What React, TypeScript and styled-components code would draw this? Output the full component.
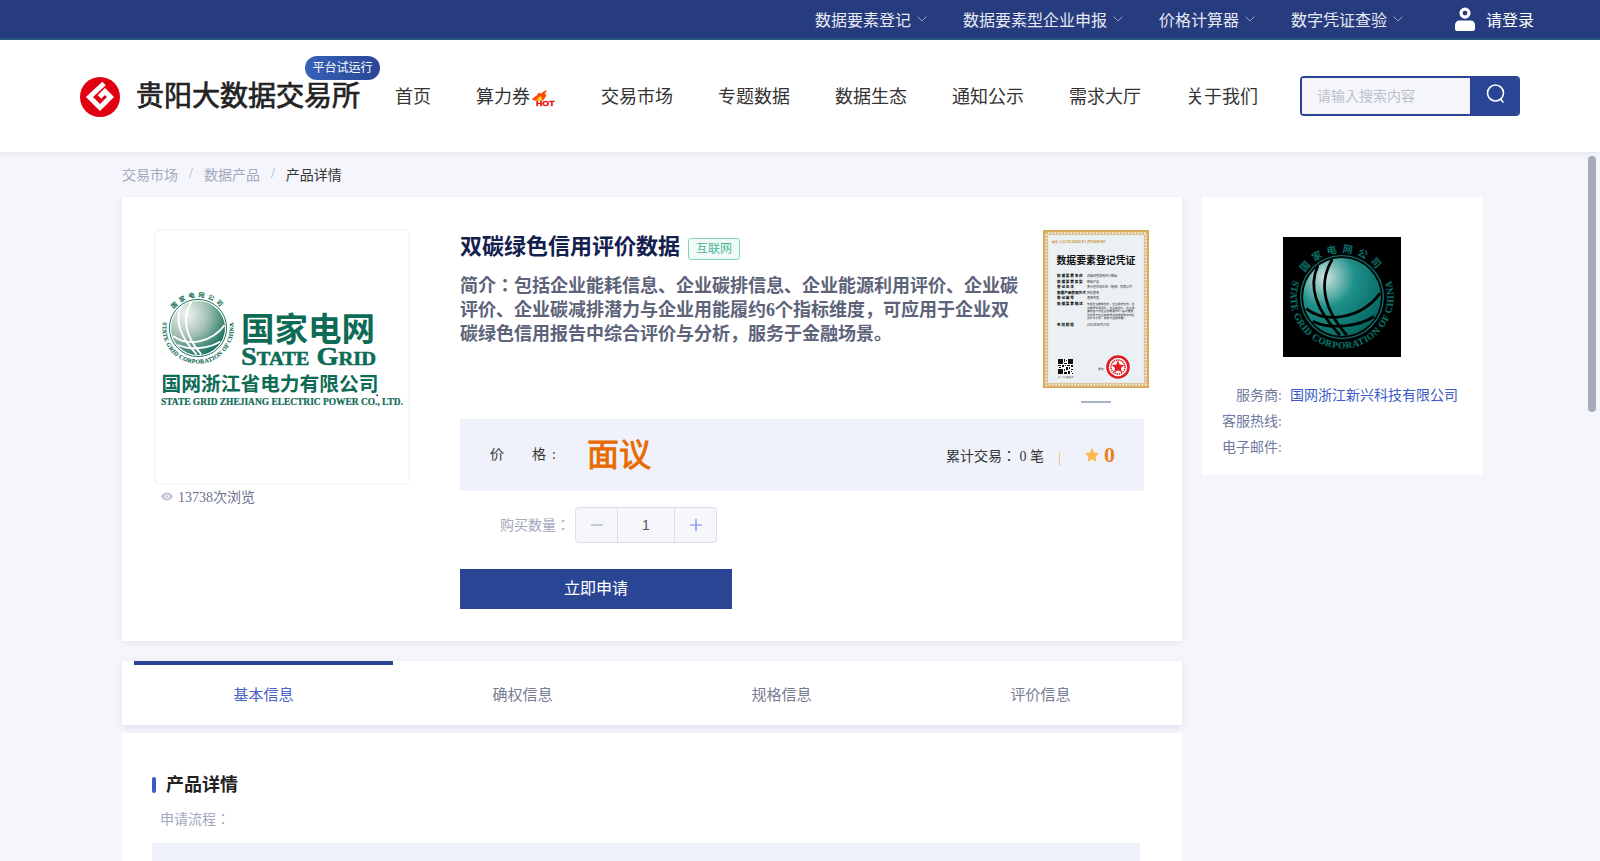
import styled, { createGlobalStyle } from "styled-components";

const GlobalStyle = createGlobalStyle`
  html, body, #root {
    height: 100%;
    margin: 0;
  }
  body {
    background: #f5f6fb;
    color: #333;
    font-family: "Liberation Serif", "Noto Sans CJK JP", serif;
    font-size: 14px;
    overflow: hidden;
  }
  * {
    box-sizing: border-box;
  }
`;

const topLinks = ["数据要素登记", "数据要素型企业申报", "价格计算器", "数字凭证查验"];
const navLinks = ["首页", "算力券", "交易市场", "专题数据", "数据生态", "通知公示", "需求大厅", "关于我们"];
const tabs = ["基本信息", "确权信息", "规格信息", "评价信息"];
const certRows = [
  { label: "数 据 要 素 名 称", value: "双碳绿色信用评价数据", y: 47 },
  { label: "数 据 要 素 类 型", value: "数据产品", y: 52.5 },
  { label: "登 记 主 体", value: "贵州省市场主体（集团）有限公司", y: 58 },
  { label: "数据产品使用方式", value: "授权使用", y: 63.5 },
  { label: "登 记 编 号", value: "通用性质", y: 69 },
  { label: "数 据 要 素 描 述", value: "", y: 75 },
  { label: "有 效 期 限", value: "2025年06月27日", y: 95.5 },
];
const certLines = [
  "包括企业能耗信息、企业碳排信息、企",
  "业能源利用评价、企业碳评价、企业碳",
  "减排潜力与企业用能履约6个指标维度",
  "可应用于企业双碳绿色信用报告中综合",
  "评价与分析，服务于金融场景。",
];

const UserIcon = () => (
  <svg width="22" height="24" viewBox="0 0 22 24" fill="#fff">
    <path d="M11 0.5a5.6 5.6 0 1 0 0 11.2a5.6 5.6 0 0 0 0-11.2zm0 3.2a2.4 2.4 0 1 1 0 4.8a2.4 2.4 0 0 1 0-4.8z" fillRule="evenodd" />
    <path d="M5.5 13.5h11c2.6 0 4.5 2 4.5 4.6V22c0 1.1-.9 2-2 2H3c-1.1 0-2-.9-2-2v-3.9c0-2.6 1.900-4.600 4.500-4.600z" />
  </svg>
);

const Chevron = () => (
  <svg width="10" height="6" viewBox="0 0 10 6" fill="none" stroke="#8f9cc0" strokeWidth="1">
    <path d="M0.500 0.500L5 5L9.500 0.500" />
  </svg>
);

const LogoMark = () => (
  <svg width="40" height="40" viewBox="0 0 40 40">
    <circle cx="20" cy="20" r="20" fill="#e00012" />
    <path d="M24 6.500L9.500 20L20 30.500L30.500 20L25 14.500L19.500 20" fill="none" stroke="#fff" strokeWidth="5" strokeLinejoin="miter" />
  </svg>
);

const HotMark = () => (
  <svg width="25" height="17" viewBox="0 0 25 17">
    <path d="M0.500 9.500C2.500 8.500 3.500 6.500 5.500 6C5.500 4.500 7.500 3 9 2.500C8.500 3.500 9.500 4 10.500 3C11.500 2 13.500 1 16 0C14.500 2 15 3 13.500 4C15 3.800 15.500 4.500 15 6C14.500 7.500 13.500 8.500 12 10.500L4 10.500C3 10.200 1.500 10 0.500 9.500Z" fill="#ff4a00" />
    <path d="M6 9.500C7 7.500 8.500 6.500 10 6C9.800 7 10.500 7.500 11 8.500L11 10.500L6.500 10.500Z" fill="#ffd21a" />
    <text x="5" y="15.800" fontFamily="Liberation Sans, sans-serif" fontWeight="700" fontSize="7.500" fill="#f00000" stroke="#f00000" strokeWidth="0.300" textLength="18.500" lengthAdjust="spacingAndGlyphs">HOT</text>
  </svg>
);

const SearchMark = () => (
  <svg width="22" height="20" viewBox="0 0 22 20" fill="none" stroke="#fff" strokeWidth="1.600">
    <circle cx="10.500" cy="9" r="8" />
    <path d="M15.500 15L18 18" strokeLinecap="round" />
  </svg>
);

const EyeMark = () => (
  <svg width="12" height="9" viewBox="0 0 12 9">
    <path d="M0 4.500C1.500 1.700 3.600 0.500 6 0.500S10.500 1.700 12 4.500C10.500 7.300 8.400 8.500 6 8.500S1.500 7.300 0 4.500Z" fill="#c1c5d6" />
    <circle cx="6" cy="4.500" r="2.300" fill="#fff" />
    <circle cx="6" cy="4.500" r="1.300" fill="#c1c5d6" />
  </svg>
);

const StarMark = () => (
  <svg width="16" height="16" viewBox="0 0 24 24" fill="#ffb84d">
    <path d="M12 1.500l3.300 6.900 7.500 1-5.500 5.200 1.400 7.500L12 18.500l-6.700 3.600 1.400-7.500L1.200 9.400l7.500-1z" />
  </svg>
);

const MinusMark = () => (
  <svg width="12" height="12" viewBox="0 0 12 12" stroke="#a3aabf" strokeWidth="1.200">
    <path d="M0 6h12" />
  </svg>
);

const PlusMark = () => (
  <svg width="12" height="12" viewBox="0 0 12 12" stroke="#6f80ea" strokeWidth="1.200">
    <path d="M0 6h12M6 0v12" />
  </svg>
);

type GlobeProps = {
  cx: number;
  cy: number;
  r: number;
  id: string;
  ring: string;
  line: string;
  light: string;
  mid: string;
  dark: string;
  textSize: number;
};

// the round State Grid emblem, shared by the big logo and the black square
const GlobeEmblem = ({ cx, cy, r, id, ring, line, light, mid, dark, textSize }: GlobeProps) => {
  const topR = r * 1.14;
  const bottomR = r * 1.32;
  const x = (v: number) => cx + v * r;
  const y = (v: number) => cy + v * r;
  return (
    <g>
      <defs>
        <radialGradient id={`${id}-g`} cx="28%" cy="25%" r="85%">
          <stop offset="0%" stopColor={light} />
          <stop offset="45%" stopColor={mid} />
          <stop offset="100%" stopColor={dark} />
        </radialGradient>
        <path id={`${id}-top`} d={`M${cx - topR * 0.866} ${cy - topR * 0.5}A${topR} ${topR} 0 0 1 ${cx + topR * 0.866} ${cy - topR * 0.5}`} />
        <path id={`${id}-bottom`} d={`M${cx - bottomR * 0.9} ${cy - bottomR * 0.436}A${bottomR} ${bottomR} 0 1 0 ${cx + bottomR * 0.9} ${cy - bottomR * 0.436}`} />
      </defs>
      <circle cx={cx} cy={cy} r={r * 1.06} fill="none" stroke={ring} strokeWidth={r * 0.035} />
      <circle cx={cx} cy={cy} r={r} fill={`url(#${id}-g)`} />
      <g fill="none" stroke={line} strokeWidth={r * 0.07}>
        <path d={`M${x(-0.62)} ${y(-0.8)}C${x(-0.9)} ${y(-0.2)} ${x(-0.6)} ${y(0.4)} ${x(-0.05)} ${y(0.98)}`} />
        <path d={`M${x(-0.25)} ${y(-0.96)}C${x(-0.65)} ${y(-0.3)} ${x(-0.4)} ${y(0.4)} ${x(0.12)} ${y(0.98)}`} />
        <path d={`M${x(-0.92)} ${y(0.3)}C${x(-0.4)} ${y(0.7)} ${x(0.5)} ${y(0.55)} ${x(0.98)} ${y(-0.1)}`} />
        <path d={`M${x(-0.75)} ${y(0.62)}C${x(-0.3)} ${y(0.85)} ${x(0.45)} ${y(0.75)} ${x(0.82)} ${y(0.5)}`} />
      </g>
      <text fontFamily="Noto Sans CJK SC, sans-serif" fontWeight="700" fontSize={textSize * 1.05} fill={ring}>
        <textPath href={`#${id}-top`} startOffset="50%" textAnchor="middle" letterSpacing={textSize * 0.5}>国家电网公司</textPath>
      </text>
      <text fontFamily="Liberation Serif, serif" fontWeight="700" fontSize={textSize} fill={ring} stroke={ring} strokeWidth={textSize * 0.02}>
        <textPath href={`#${id}-bottom`} startOffset="50%" textAnchor="middle" letterSpacing={textSize * 0.05}>STATE GRID CORPORATION OF CHINA</textPath>
      </text>
    </g>
  );
};

const StateGridLogo = () => (
  <svg width="252" height="252" viewBox="0 0 252 252">
    <GlobeEmblem cx={42} cy={97} r={27} id="big" ring="#0e6b56" line="#fff" light="#f1f4f1" mid="#a9c4b8" dark="#0e6b56" textSize={6} />
    <g fill="#0e6b56" stroke="#0e6b56" fontWeight="700">
      <text x="85" y="110" strokeWidth="0" fontFamily="Noto Sans CJK SC, sans-serif" fontSize="33" textLength="134" lengthAdjust="spacingAndGlyphs">国家电网</text>
      <text x="85" y="134" strokeWidth="0.500" fontFamily="Liberation Serif, serif" fontSize="25" textLength="135" lengthAdjust="spacingAndGlyphs" style={{ fontVariant: "small-caps" }}>State Grid</text>
      <text x="5.500" y="160" strokeWidth="0" fontFamily="Noto Sans CJK SC, sans-serif" fontSize="19.600" textLength="217" lengthAdjust="spacingAndGlyphs">国网浙江省电力有限公司</text>
      <text x="5" y="173.500" strokeWidth="0.200" fontFamily="Liberation Serif, serif" fontSize="9.500" textLength="242" lengthAdjust="spacingAndGlyphs">STATE GRID ZHEJIANG ELECTRIC POWER CO., LTD.</text>
    </g>
    <rect x="220.500" y="163.500" width="1.500" height="1.500" fill="#222" />
  </svg>
);

const VendorLogo = () => (
  <svg width="118" height="120" viewBox="0 0 118 120">
    <rect width="118" height="120" fill="#000" />
    <GlobeEmblem cx={59} cy={60} r={39} id="small" ring="#0b6f68" line="#000" light="#d4e4e2" mid="#1d9089" dark="#05645f" textSize={9.500} />
  </svg>
);

const Certificate = () => (
  <svg width="106" height="158" viewBox="0 0 106 158">
    <rect width="106" height="158" fill="#eaf0f3" />
    <rect x="1" y="1" width="104" height="156" fill="none" stroke="#d9a95b" strokeWidth="2" />
    <rect x="3" y="3" width="100" height="152" fill="none" stroke="#e4bd7b" strokeWidth="2.400" strokeDasharray="2 1.200" />
    <rect x="4.800" y="4.800" width="96.400" height="148.400" fill="none" stroke="#c99a4f" strokeWidth="0.500" />
    <text x="9" y="13" fontFamily="Liberation Sans, sans-serif" fontWeight="700" fontSize="2.800" fill="#c99032">编号: 1-22 736 202506 R 1-JP762698 R01</text>
    <text x="53" y="34" textAnchor="middle" fontFamily="Noto Sans CJK SC, sans-serif" fontWeight="700" fontSize="10" fill="#111" textLength="79" lengthAdjust="spacingAndGlyphs">数据要素登记凭证</text>
    {certRows.map((row) => (
      <g key={row.label}>
        <text x="14" y={row.y} fontFamily="Noto Sans CJK SC, sans-serif" fontWeight="700" fontSize="3.600" fill="#000">{row.label}</text>
        <text x="44" y={row.y} fontFamily="Noto Sans CJK SC, sans-serif" fontSize="3" fill="#333">{row.value}</text>
      </g>
    ))}
    {certLines.map((line, i) => (
      <text key={line} x="44" y={75 + i * 3.600} fontFamily="Noto Sans CJK SC, sans-serif" fontSize="2.800" fill="#222">{line}</text>
    ))}
    <rect x="15" y="129" width="15" height="15" fill="#fff" />
    <path d="M15 129h5v5h-5zM25 129h5v5h-5zM15 139h5v5h-5zM21 129h1v3h-1zM23 130h1v1h-1zM21 133h3v1h-3zM15 135h3v1h-3zM19 135h2v2h-2zM22 135h1v1h-1zM24 135h3v1h-3zM28 135h2v2h-2zM16 137h2v1h-2zM23 137h2v3h-2zM26 137h1v2h-1zM21 139h1v2h-1zM28 139h2v1h-2zM21 142h3v2h-3zM25 141h2v3h-2zM28 141h1v1h-1zM29 143h1v1h-1z" fill="#111" />
    <text x="15" y="148" fontFamily="Noto Sans CJK SC, sans-serif" fontSize="2.500" fill="#555">扫一扫 查真伪</text>
    <text x="55" y="140" fontFamily="Noto Sans CJK SC, sans-serif" fontSize="2.800" fill="#444">贵阳</text>
    <circle cx="75" cy="137" r="10.500" fill="#fff" stroke="#e01a22" strokeWidth="2.600" />
    <circle cx="75" cy="137" r="7" fill="none" stroke="#e01a22" strokeWidth="1.600" strokeDasharray="1.400 0.800" />
    <path d="M75 130.500l1.800 4.200 4.500.4-3.400 3 1 4.400-3.900-2.300-3.900 2.300 1-4.400-3.400-3 4.500-.4z" fill="#e01a22" />
  </svg>
);

const App = () => (
  <Page>
    <GlobalStyle />
    <TopBar>
      {topLinks.map((link) => (
        <TopLink key={link}>
          {link}
          <Chevron />
        </TopLink>
      ))}
      <LoginLink>
        <UserIcon />
        请登录
      </LoginLink>
    </TopBar>

    <Header>
      <Brand>
        <LogoMark />
        <BrandName>贵阳大数据交易所</BrandName>
        <BrandBadge>平台试运行</BrandBadge>
      </Brand>
      <Nav>
        {navLinks.map((link) => (
          <NavLink key={link}>
            {link}
            {link === "算力券" && <HotMark />}
          </NavLink>
        ))}
      </Nav>
      <SearchBox>
        <SearchInput placeholder="请输入搜索内容" />
        <SearchButton>
          <SearchMark />
        </SearchButton>
      </SearchBox>
    </Header>

    <Scroller>
      <Content>
        <MainColumn>
          <Breadcrumb>
            <Crumb>交易市场</Crumb>
            <CrumbSep>/</CrumbSep>
            <Crumb>数据产品</Crumb>
            <CrumbSep>/</CrumbSep>
            <Crumb $current>产品详情</Crumb>
          </Breadcrumb>

          <ProductCard>
            <Gallery>
              <LogoFrame>
                <StateGridLogo />
              </LogoFrame>
              <Views>
                <EyeMark />
                13738次浏览
              </Views>
            </Gallery>

            <Info>
              <InfoTop>
                <Summary>
                  <TitleRow>
                    <Title>双碳绿色信用评价数据</Title>
                    <Tag>互联网</Tag>
                  </TitleRow>
                  <Intro>简介：包括企业能耗信息、企业碳排信息、企业能源利用评价、企业碳评价、企业碳减排潜力与企业用能履约6个指标维度，可应用于企业双碳绿色信用报告中综合评价与分析，服务于金融场景。</Intro>
                </Summary>
                <CertColumn>
                  <Certificate />
                  <CertDot />
                </CertColumn>
              </InfoTop>

              <PriceBar>
                <PriceLabel>
                  <span>价</span>
                  <span>格</span>
                  <span>:</span>
                </PriceLabel>
                <PriceValue>面议</PriceValue>
                <TradeCount>累计交易： 0 笔</TradeCount>
                <PriceDivider />
                <StarMark />
                <Score>0</Score>
              </PriceBar>

              <QuantityRow>
                <QuantityLabel>购买数量：</QuantityLabel>
                <Stepper>
                  <StepButton>
                    <MinusMark />
                  </StepButton>
                  <StepValue>1</StepValue>
                  <StepButton>
                    <PlusMark />
                  </StepButton>
                </Stepper>
              </QuantityRow>

              <ApplyButton>立即申请</ApplyButton>
            </Info>
          </ProductCard>

          <TabCard>
            {tabs.map((tab, i) => (
              <Tab key={tab} $active={i === 0}>
                {tab}
              </Tab>
            ))}
          </TabCard>

          <DetailCard>
            <SectionTitle>产品详情</SectionTitle>
            <SectionLabel>申请流程：</SectionLabel>
            <FlowBlock />
          </DetailCard>
        </MainColumn>

        <VendorCard>
          <VendorLogoWrap>
            <VendorLogo />
          </VendorLogoWrap>
          <VendorRow>
            <VendorLabel>服务商:</VendorLabel>
            <VendorLink>国网浙江新兴科技有限公司</VendorLink>
          </VendorRow>
          <VendorRow>
            <VendorLabel>客服热线:</VendorLabel>
          </VendorRow>
          <VendorRow>
            <VendorLabel>电子邮件:</VendorLabel>
          </VendorRow>
        </VendorCard>
      </Content>
    </Scroller>
    <ScrollThumb />
  </Page>
);

export default App;

const Page = styled.div`
  position: relative;
  height: 100vh;
  display: flex;
  flex-direction: column;
  overflow: hidden;
`;

const TopBar = styled.div`
  flex: none;
  height: 40px;
  padding-right: 66px;
  display: flex;
  align-items: center;
  justify-content: flex-end;
  gap: 36px;
  background: #273c7e;
  border-bottom: 2px solid #25587c;
`;

const TopLink = styled.a`
  display: flex;
  align-items: center;
  gap: 6px;
  color: #e6e9f3;
  font-size: 16px;
`;

const LoginLink = styled(TopLink)`
  margin-left: 15px;
  gap: 10px;
  color: #fff;
`;

const Header = styled.header`
  position: relative;
  z-index: 2;
  flex: none;
  height: 112px;
  padding-left: 80px;
  display: flex;
  align-items: center;
  background: #fff;
  box-shadow: 0 1px 6px rgba(40, 50, 90, 0.1);
`;

const Brand = styled.div`
  position: relative;
  margin-top: 2px;
  display: flex;
  align-items: center;
  gap: 16px;
`;

const BrandName = styled.div`
  color: #222;
  font-size: 28px;
  font-weight: 400;
  line-height: 40px;
  white-space: nowrap;
  -webkit-text-stroke: 0.7px #222;
`;

const BrandBadge = styled.div`
  position: absolute;
  top: -21px;
  right: -20px;
  width: 75px;
  height: 24px;
  border-radius: 12px;
  background: linear-gradient(90deg, #3661b8, #2a4795);
  color: #fff;
  font-size: 12px;
  line-height: 24px;
  text-align: center;
`;

const Nav = styled.nav`
  margin-left: 35px;
  padding-bottom: 2px;
  display: flex;
  align-items: center;
  gap: 45px;
`;

const NavLink = styled.a`
  display: flex;
  align-items: center;
  color: #333;
  font-size: 18px;
  white-space: nowrap;

  svg {
    margin: 7px 0 0 1px;
  }
`;

const SearchBox = styled.div`
  width: 220px;
  height: 40px;
  margin-left: 42px;
  display: flex;
  border: 2px solid #2b4595;
  border-radius: 4px;
  overflow: hidden;
`;

const SearchInput = styled.input`
  flex: 1;
  min-width: 0;
  padding: 2px 15px 0;
  border: none;
  outline: none;
  background: #f5f6fa;
  font-family: inherit;
  font-size: 14px;

  &::placeholder {
    color: #bcbfcd;
    opacity: 1;
  }
`;

const SearchButton = styled.div`
  flex: none;
  width: 48px;
  padding: 0 0 5px 3px;
  display: flex;
  align-items: center;
  justify-content: center;
  background: #2b4595;
`;

const Scroller = styled.div`
  flex: 1;
  min-height: 0;
  overflow: hidden;
`;

const ScrollThumb = styled.div`
  position: absolute;
  top: 156px;
  right: 4px;
  width: 8px;
  height: 256px;
  border-radius: 4px;
  background: #a5acb8;
`;

const Content = styled.div`
  width: 1360px;
  margin-left: 122px;
  display: flex;
  align-items: flex-start;
  gap: 20px;
`;

const MainColumn = styled.main`
  flex: none;
  width: 1060px;
`;

const Breadcrumb = styled.div`
  height: 45px;
  padding-bottom: 2px;
  display: flex;
  align-items: center;
  font-size: 14px;
`;

const Crumb = styled.span<{ $current?: boolean }>`
  color: ${(props) => (props.$current ? "#333" : "#a3a9c0")};
`;

const CrumbSep = styled.span`
  margin: 0 11px;
  color: #a8adbc;
`;

const ProductCard = styled.section`
  height: 444px;
  padding: 32px 0 0 32px;
  display: flex;
  gap: 50px;
  background: #fff;
  box-shadow: 0 2px 6px rgba(40, 50, 90, 0.08);
`;

const Gallery = styled.div`
  flex: none;
  width: 256px;
`;

const LogoFrame = styled.div`
  width: 256px;
  height: 256px;
  border: 2px solid #f5f6fb;
  border-radius: 6px;
`;

const Views = styled.div`
  height: 24px;
  margin-top: -1px;
  padding-left: 7px;
  display: flex;
  align-items: center;
  gap: 5px;
  color: #6b7090;
  font-size: 14px;
`;

const Info = styled.div`
  flex: none;
  width: 684px;
`;

const InfoTop = styled.div`
  height: 190px;
  display: flex;
`;

const Summary = styled.div`
  flex: none;
  width: 583px;
`;

const TitleRow = styled.div`
  height: 36px;
  display: flex;
  align-items: center;
  gap: 8px;
`;

const Title = styled.h1`
  margin: 0;
  color: #14204e;
  font-size: 22px;
  font-weight: 700;
  line-height: 36px;
`;

const Tag = styled.span`
  width: 52px;
  height: 22px;
  margin-top: 3px;
  border: 1px solid #84d5bd;
  border-radius: 3px;
  background: #f0faf7;
  color: #4fb598;
  font-size: 12px;
  line-height: 20px;
  text-align: center;
`;

const Intro = styled.p`
  width: 562px;
  margin: 9px 0 0;
  color: #5d6379;
  font-size: 18px;
  font-weight: 700;
  line-height: 24px;
`;

const CertColumn = styled.div`
  flex: none;
  width: 106px;
  padding-top: 1px;
  display: flex;
  flex-direction: column;
  align-items: center;
`;

const CertDot = styled.div`
  width: 30px;
  height: 2px;
  margin-top: 13px;
  background: #aab2c8;
`;

const PriceBar = styled.div`
  height: 72px;
  padding: 0 29px 0 30px;
  display: flex;
  align-items: center;
  background: #eff2fb;
`;

const PriceLabel = styled.div`
  display: flex;
  align-items: baseline;
  padding-bottom: 4px;
  color: #333;
  font-size: 14px;

  span + span {
    margin-left: 28px;
  }
  span:last-child {
    margin-left: 6px;
  }
`;

const PriceValue = styled.div`
  margin-left: 31px;
  margin-right: auto;
  color: #e96a00;
  font-size: 32px;
  font-weight: 400;
  line-height: 44px;
  -webkit-text-stroke: 0.9px #e96a00;
`;

const TradeCount = styled.div`
  color: #333;
  font-size: 14px;
`;

const PriceDivider = styled.div`
  width: 1px;
  height: 14px;
  margin: 8px 24px 0 15px;
  background: #f5c77e;
`;

const Score = styled.div`
  margin-left: 4px;
  color: #e8821e;
  font-size: 22px;
  font-weight: 700;
`;

const QuantityRow = styled.div`
  margin-top: 16px;
  padding-left: 40px;
  display: flex;
  align-items: center;
  gap: 5px;
`;

const QuantityLabel = styled.div`
  padding-bottom: 2px;
  color: #a5a9bc;
  font-size: 14px;
`;

const Stepper = styled.div`
  width: 142px;
  height: 36px;
  display: flex;
  border: 1px solid #dcdfe9;
  border-radius: 4px;
  background: #f6f7fb;
`;

const StepButton = styled.div`
  flex: none;
  width: 41px;
  display: flex;
  align-items: center;
  justify-content: center;
`;

const StepValue = styled.div`
  flex: 1;
  border-left: 1px solid #dcdfe9;
  border-right: 1px solid #dcdfe9;
  color: #555;
  font-family: "Liberation Sans", sans-serif;
  font-size: 14px;
  line-height: 34px;
  text-align: center;
`;

const ApplyButton = styled.div`
  width: 272px;
  height: 40px;
  margin-top: 26px;
  background: #2b4595;
  color: #fff;
  font-size: 16px;
  line-height: 40px;
  text-align: center;
`;

const TabCard = styled.div`
  height: 64px;
  margin-top: 20px;
  padding: 0 12px;
  display: grid;
  grid-template-columns: repeat(4, 259px);
  background: #fff;
  box-shadow: 0 3px 8px rgba(40, 50, 90, 0.1);
`;

const Tab = styled.div<{ $active?: boolean }>`
  border-top: 4px solid ${(props) => (props.$active ? "#2b4595" : "transparent")};
  color: ${(props) => (props.$active ? "#4762c4" : "#777c93")};
  font-size: 15px;
  line-height: 60px;
  text-align: center;
`;

const DetailCard = styled.section`
  margin-top: 8px;
  padding: 40px 30px 30px;
  background: #fff;
`;

const SectionTitle = styled.h2`
  margin: 0;
  padding-left: 14px;
  position: relative;
  color: #222;
  font-size: 18px;
  font-weight: 700;
  line-height: 24px;

  &::before {
    content: "";
    position: absolute;
    left: 0;
    top: 4px;
    width: 4px;
    height: 16px;
    border-radius: 2px;
    background: #3b5bc0;
  }
`;

const SectionLabel = styled.div`
  margin-top: 11px;
  padding-left: 8px;
  height: 24px;
  color: #a3a9c0;
  font-size: 14px;
  line-height: 24px;
`;

const FlowBlock = styled.div`
  width: 988px;
  height: 300px;
  margin-top: 11px;
  background: #eef1fa;
`;

const VendorCard = styled.aside`
  flex: none;
  width: 280px;
  height: 278px;
  margin-top: 45px;
  padding: 40px 0 0 20px;
  background: #fff;
`;

const VendorLogoWrap = styled.div`
  width: 118px;
  height: 120px;
  margin: 0 0 24px 61px;
`;

const VendorRow = styled.div`
  height: 26px;
  display: flex;
  align-items: center;
  gap: 8px;
  font-size: 14px;
`;

const VendorLabel = styled.span`
  width: 60px;
  color: #7079a0;
  text-align: right;
  white-space: nowrap;
`;

const VendorLink = styled.a`
  color: #3c5bc4;
  white-space: nowrap;
`;
